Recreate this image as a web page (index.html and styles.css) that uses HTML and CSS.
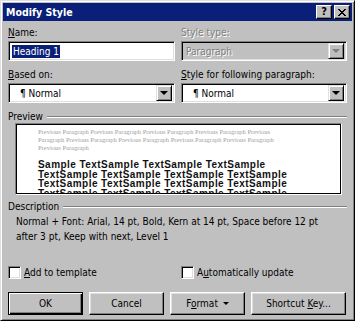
FILE: index.html
```html
<!DOCTYPE html>
<html lang="en">
<head>
    <meta charset="UTF-8">
    <title>Modify Style</title>
    <link rel="stylesheet" href="styles.css">
</head>
<body>
    <div class="window">
        <div class="titlebar">
            <span class="title">Modify Style</span>
            <div class="tb-buttons">
                <span class="tb-btn help">?</span>
                <span class="tb-btn">
                    <svg width="8" height="7" viewBox="0 0 8 7"><path d="M0 0h2v1h1v1h2v-1h1v-1h2v1h-1v1h-1v1h-1v1h1v1h1v1h1v1h-2v-1h-1v-1h-2v1h-1v1h-2v-1h1v-1h1v-1h1v-1h-1v-1h-1v-1h-1z" fill="#000"/></svg>
                </span>
            </div>
        </div>

        <div class="content">
            <div class="row">
                <div class="col">
                    <div class="label"><u>N</u>ame:</div>
                    <div class="field textbox"><span class="selected">Heading 1</span></div>
                </div>
                <div class="col">
                    <div class="label disabled">Style type:</div>
                    <div class="field combo off">
                        <span class="value disabled">Paragraph</span>
                        <span class="drop"><i class="arrow gray"></i></span>
                    </div>
                </div>
            </div>

            <div class="row second">
                <div class="col">
                    <div class="label"><u>B</u>ased on:</div>
                    <div class="field combo">
                        <span class="value">¶ Normal</span>
                        <span class="drop"><i class="arrow"></i></span>
                    </div>
                </div>
                <div class="col">
                    <div class="label"><u>S</u>tyle for following paragraph:</div>
                    <div class="field combo">
                        <span class="value">¶ Normal</span>
                        <span class="drop"><i class="arrow"></i></span>
                    </div>
                </div>
            </div>

            <div class="group-head preview-head">
                <span>Preview</span>
                <div class="etched"></div>
            </div>
            <div class="preview">
                <div class="prev-text">
                    <div>Previous Paragraph Previous Paragraph Previous Paragraph Previous Paragraph Previous</div>
                    <div>Paragraph Previous Paragraph Previous Paragraph Previous Paragraph Previous Paragraph</div>
                    <div>Previous Paragraph</div>
                </div>
                <div class="sample-text">
                    <div>Sample TextSample TextSample TextSample</div>
                    <div>TextSample TextSample TextSample TextSample</div>
                    <div>TextSample TextSample TextSample TextSample</div>
                    <div>TextSample TextSample TextSample TextSample</div>
                </div>
            </div>

            <div class="group-head desc-head">
                <span>Description</span>
                <div class="etched"></div>
            </div>
            <div class="description">
                Normal + Font: Arial, 14 pt, Bold, Kern at 14 pt, Space before 12 pt<br>
                after 3 pt, Keep with next, Level 1
            </div>

            <div class="row checks">
                <div class="col check">
                    <span class="box"></span>
                    <span><u>A</u>dd to template</span>
                </div>
                <div class="col check">
                    <span class="box"></span>
                    <span>A<u>u</u>tomatically update</span>
                </div>
            </div>

            <div class="buttons">
                <button class="btn default">OK</button>
                <button class="btn">Cancel</button>
                <button class="btn">F<u>o</u>rmat <i class="arrow small"></i></button>
                <button class="btn wide">Shortcut <u>K</u>ey...</button>
            </div>
        </div>
    </div>
</body>
</html>
```

FILE: styles.css
```css
* {
    margin: 0;
    padding: 0;
    box-sizing: border-box;
}

body {
    background: #c0c0c0;
    font-family: "DejaVu Sans Condensed", "Liberation Sans", Arial, sans-serif;
    font-size: 10px;
    color: #000;
}

u {
    text-decoration: underline;
    text-underline-offset: 1px;
}

.window {
    width: 355px;
    height: 321px;
    background: #c0c0c0;
    border: 1px solid;
    border-color: #dfdfdf #000 #000 #dfdfdf;
    box-shadow: inset 1px 1px #fff, inset -1px -1px #808080;
    padding: 2px;
}

.titlebar {
    height: 18px;
    background: #0a1f78;
    display: flex;
    align-items: center;
    justify-content: space-between;
    padding: 0 2px 0 3px;
}

.title {
    color: #fff;
    font-weight: bold;
    font-size: 10.5px;
}

.tb-buttons {
    display: flex;
    gap: 2px;
}

.tb-btn {
    width: 16px;
    height: 14px;
    background: #c0c0c0;
    border: 1px solid;
    border-color: #fff #000 #000 #fff;
    box-shadow: inset -1px -1px #808080;
    display: flex;
    align-items: center;
    justify-content: center;
}

.tb-btn.help {
    font-weight: bold;
    font-size: 11px;
    line-height: 12px;
}

.content {
    padding: 5px 5px 0 5px;
}

.row {
    display: flex;
    gap: 6px;
}

.row.second {
    margin-top: 7px;
}

.col {
    flex: 1;
}

.col:last-child {
    flex: 0 0 166px;
}

.label {
    line-height: 13px;
    margin-bottom: 2px;
}

.disabled {
    color: #808080;
    text-shadow: 1px 1px #fff;
}

.field {
    height: 20px;
    background: #fff;
    border: 1px solid;
    border-color: #808080 #fff #fff #808080;
    box-shadow: inset 1px 1px #000, inset -1px -1px #dfdfdf;
    display: flex;
    align-items: center;
    padding: 2px;
}

.textbox {
    padding-left: 3px;
}

.selected {
    background: #0a1f78;
    color: #fff;
    line-height: 13px;
    padding: 0 1px;
}

.combo {
    justify-content: space-between;
}

.combo.off {
    background: #c0c0c0;
}

.combo .value {
    padding-left: 9px;
}

.combo.off .value {
    padding-left: 2px;
}

.drop {
    width: 16px;
    height: 16px;
    background: #c0c0c0;
    border: 1px solid;
    border-color: #dfdfdf #000 #000 #dfdfdf;
    box-shadow: inset 1px 1px #fff, inset -1px -1px #808080;
    display: flex;
    align-items: center;
    justify-content: center;
}

.arrow {
    display: inline-block;
    width: 0;
    height: 0;
    border-left: 4px solid transparent;
    border-right: 4px solid transparent;
    border-top: 4px solid #000;
}

.arrow.gray {
    border-top-color: #808080;
}

.arrow.small {
    border-left-width: 3px;
    border-right-width: 3px;
    border-top-width: 3px;
    vertical-align: 2px;
    margin-left: 2px;
}

.group-head {
    display: flex;
    align-items: center;
    gap: 4px;
    line-height: 13px;
    margin-top: 7px;
}

.group-head.desc-head {
    margin-top: 5px;
}

.etched {
    flex: 1;
    border-top: 1px solid #808080;
    border-bottom: 1px solid #fff;
}

.preview {
    margin: 0 5px 0 7px;
    height: 72px;
    background: #fff;
    border: 1px solid;
    border-color: #808080 #fff #fff #808080;
    box-shadow: inset 1px 1px #000, inset -1px -1px #000;
    overflow: hidden;
    padding: 4px 0 0 22px;
    white-space: nowrap;
}

.prev-text {
    font-family: "Liberation Serif", "Times New Roman", serif;
    font-size: 6.5px;
    line-height: 8px;
    color: #a0a0a0;
}

.sample-text {
    margin-top: 8px;
    font-family: "Liberation Sans", Arial, sans-serif;
    font-size: 10px;
    line-height: 9.6px;
    font-weight: bold;
    letter-spacing: 0.45px;
    color: #111;
}

.description {
    padding: 1px 0 0 8px;
    line-height: 15px;
}

.checks {
    margin-top: 22px;
}

.check {
    display: flex;
    align-items: center;
    gap: 3px;
}

.box {
    width: 13px;
    height: 13px;
    background: #fff;
    border: 1px solid;
    border-color: #808080 #fff #fff #808080;
    box-shadow: inset 1px 1px #000, inset -1px -1px #dfdfdf;
}

.buttons {
    display: flex;
    gap: 6px;
    margin-top: 13px;
}

.btn {
    width: 75px;
    height: 23px;
    background: #c0c0c0;
    font-family: "DejaVu Sans Condensed", "Liberation Sans", Arial, sans-serif;
    font-size: 10px;
    color: #000;
    border: 1px solid;
    border-color: #fff #000 #000 #fff;
    box-shadow: inset -1px -1px #808080, inset 1px 1px #dfdfdf;
}

.btn.default {
    border: 1px solid #000;
    box-shadow: inset 1px 1px #fff, inset -1px -1px #000, inset -2px -2px #808080;
}

.btn.wide {
    width: 95px;
}
```
